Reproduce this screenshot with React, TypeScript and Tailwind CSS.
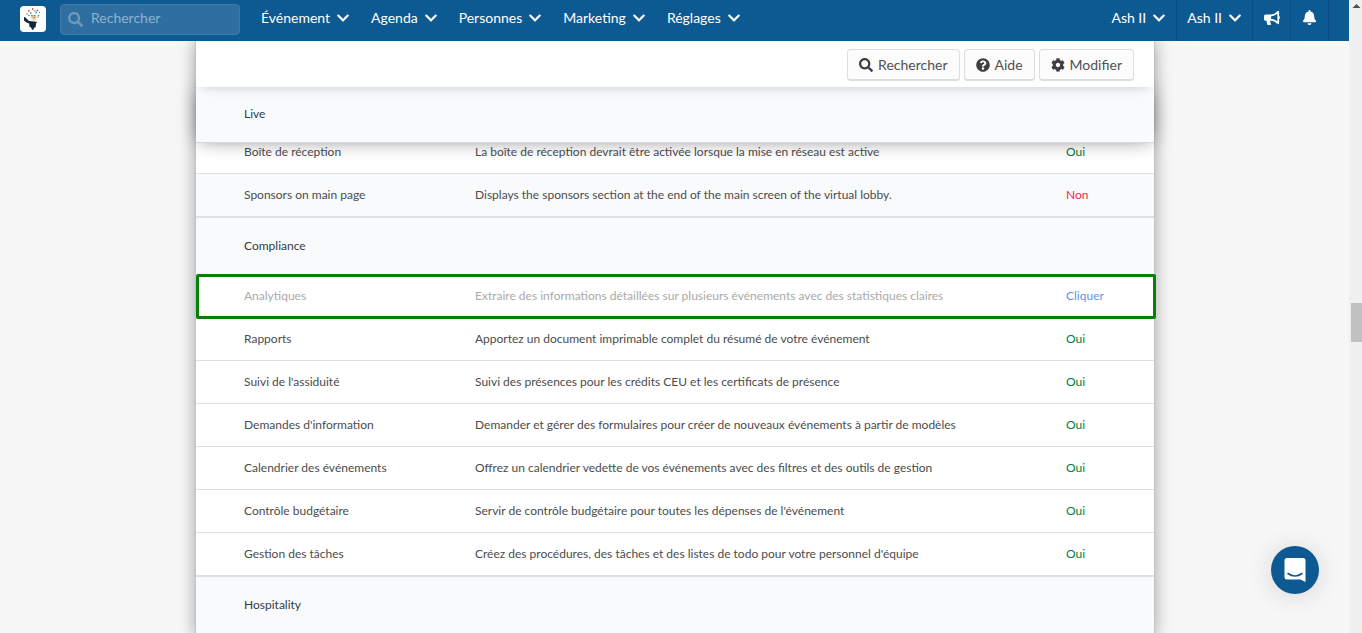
import { FaBell, FaBullhorn, FaChevronDown, FaCog, FaQuestionCircle, FaSearch } from 'react-icons/fa'

type Row = {
  name: string
  description: string
  status: 'Oui' | 'Non' | 'Cliquer'
}

type Section = {
  title: string
  pinned?: boolean
  rows: Row[]
}

const menus = ['Événement', 'Agenda', 'Personnes', 'Marketing', 'Réglages']

const sections: Section[] = [
  {
    title: 'Live',
    pinned: true,
    rows: [
      {
        name: 'Boîte de réception',
        description: 'La boîte de réception devrait être activée lorsque la mise en réseau est active',
        status: 'Oui',
      },
      {
        name: 'Sponsors on main page',
        description: 'Displays the sponsors section at the end of the main screen of the virtual lobby.',
        status: 'Non',
      },
    ],
  },
  {
    title: 'Compliance',
    rows: [
      {
        name: 'Analytiques',
        description: 'Extraire des informations détaillées sur plusieurs événements avec des statistiques claires',
        status: 'Cliquer',
      },
      {
        name: 'Rapports',
        description: 'Apportez un document imprimable complet du résumé de votre événement',
        status: 'Oui',
      },
      {
        name: "Suivi de l'assiduité",
        description: 'Suivi des présences pour les crédits CEU et les certificats de présence',
        status: 'Oui',
      },
      {
        name: "Demandes d'information",
        description: 'Demander et gérer des formulaires pour créer de nouveaux événements à partir de modèles',
        status: 'Oui',
      },
      {
        name: 'Calendrier des événements',
        description: 'Offrez un calendrier vedette de vos événements avec des filtres et des outils de gestion',
        status: 'Oui',
      },
      {
        name: 'Contrôle budgétaire',
        description: "Servir de contrôle budgétaire pour toutes les dépenses de l'événement",
        status: 'Oui',
      },
      {
        name: 'Gestion des tâches',
        description: "Créez des procédures, des tâches et des listes de todo pour votre personnel d'équipe",
        status: 'Oui',
      },
    ],
  },
  { title: 'Hospitality', rows: [] },
]

const actions = [
  { label: 'Rechercher', icon: FaSearch },
  { label: 'Aide', icon: FaQuestionCircle },
  { label: 'Modifier', icon: FaCog },
]

function Logo() {
  return (
    <svg viewBox="0 0 26 26" className="size-[26px]" aria-hidden="true">
      <rect width="26" height="26" rx="4" fill="#fff" />
      <path d="M4 11l1.500.5 3.500 3.500 7.500.8.500 1-1 .5-.3 4-1.700.5-.5 2h-1.500l-1-2.500-1.500-.3-.3-3.500-2.700-1-2.500-2z" fill="#12283a" />
      <path d="M10.500 10l1.500 4.500h3.500l1.500-4-3-1.500z" fill="#ead9b5" />
      <path d="M11 9l2 1M15 12l-2-1" stroke="#e2703f" strokeWidth="1.300" />
      <path d="M8 5h1.500M12 3h1.500M17 4l1 1M6.500 8h1" stroke="#d8432f" strokeWidth="1.400" />
      <path d="M10 7h1.500M15.500 6.500h1.500M19 9l-1 1M14 9.500h1.500" stroke="#3c9c8c" strokeWidth="1.400" />
      <path d="M14.500 5h1M19 6.500h.8M8.500 9.500h1M17.500 11h.8" stroke="#33475b" strokeWidth="1.200" />
    </svg>
  )
}

function TopBar() {
  return (
    <header className="relative z-30 flex h-[41px] shrink-0 items-stretch bg-[#0d5991] text-sm text-white">
      <a href="#accueil" aria-label="Accueil" className="mr-3.5 ml-5 flex items-center pb-[3px]">
        <Logo />
      </a>
      <label className="mt-1 flex h-[31px] w-[180px] items-center gap-2 rounded border border-[#3f79a8] bg-[#2e6ea0] px-[7px]">
        <FaSearch className="size-[15px] shrink-0 text-[#7199bc]" />
        <input
          type="text"
          aria-label="Rechercher"
          placeholder="Rechercher"
          className="w-full min-w-0 bg-transparent pb-1 outline-none placeholder:text-[#8fb2cf]"
        />
      </label>
      <nav className="ml-[21px] flex items-center gap-[21px] pb-1.5">
        {menus.map((label) => (
          <button key={label} type="button" className="flex items-center gap-1.5">
            {label}
            <FaChevronDown className="size-3.5" />
          </button>
        ))}
      </nav>
      <div className="ml-auto flex items-stretch pr-5">
        {['compte', 'profil'].map((id) => (
          <button
            key={id}
            type="button"
            className="flex items-center gap-1.5 border-r border-[#0b4f82] px-[10px] pb-1.5"
          >
            Ash II
            <FaChevronDown className="size-3.5" />
          </button>
        ))}
        <button
          type="button"
          aria-label="Annonces"
          className="flex w-[38px] items-center justify-center border-r border-[#0b4f82] pb-1.5"
        >
          <FaBullhorn className="size-4" />
        </button>
        <button
          type="button"
          aria-label="Notifications"
          className="flex w-[38px] items-center justify-center border-r border-[#0b4f82] pb-1.5"
        >
          <FaBell className="size-[15px]" />
        </button>
      </div>
    </header>
  )
}

function StatusCell({ status }: { status: Row['status'] }) {
  if (status === 'Cliquer') {
    return (
      <a href="#analytiques" className="text-[#6592e0]">
        Cliquer
      </a>
    )
  }
  return <span className={status === 'Oui' ? 'text-[#008040]' : 'text-[#ed1c4b]'}>{status}</span>
}

function FeatureSection({ section }: { section: Section }) {
  return (
    <section className="border-b-2 border-[#dee1e3]">
      <h2
        className={
          section.pinned
            ? 'relative z-10 -mb-3 flex h-14 items-center border-b border-[#d5dadd] bg-[#f9fafc] px-12 pb-0.5 text-xs text-[#333c45] shadow-[0_0_20px_-4px_rgba(0,0,0,0.55)]'
            : 'flex h-[57px] items-center bg-[#f9fafc] px-12 pb-0.5 text-xs text-[#333c45]'
        }
      >
        {section.title}
      </h2>
      <table className="w-full table-fixed border-separate border-spacing-0 text-left text-xs text-[#4c4c4c]">
        <colgroup>
          <col className="w-[279px]" />
          <col />
          <col className="w-[100px]" />
        </colgroup>
        <tbody className="[&>tr:not(:last-child)>*]:border-b [&>tr:not(:last-child)>*]:border-[#dee1e3]">
          {section.rows.map((row) => {
            const locked = row.status === 'Cliquer'
            return (
              <tr
                key={row.name}
                className={`relative h-[43px] last:h-[42px] ${locked ? 'text-[#a9a9a9]' : ''} ${
                  row.status === 'Non' ? 'bg-[#f9fafc]' : ''
                }`}
              >
                <th scope="row" className="p-0 pl-12 font-normal">
                  {row.name}
                  {locked && (
                    <span className="pointer-events-none absolute -top-px -right-0.5 -bottom-px left-0 rounded-xs border-3 border-[#058009]" />
                  )}
                </th>
                <td>{row.description}</td>
                <td className="pl-3">
                  <StatusCell status={row.status} />
                </td>
              </tr>
            )
          })}
        </tbody>
      </table>
    </section>
  )
}

export default function App() {
  return (
    <div className="flex h-screen overflow-hidden bg-[#f7f7f7] font-['Lato',sans-serif]">
      <div className="flex min-w-0 flex-1 flex-col">
        <TopBar />
        <main className="min-h-0 flex-1 pl-px">
          <div className="mx-auto min-h-full max-w-[960px] border-x border-[#c4c4c4] bg-white shadow-[0_0_16px_rgba(0,0,0,0.35)]">
            <div className="relative z-20 flex h-[46px] items-center justify-end gap-1 bg-white pt-0.5 pr-5 shadow-[0_6px_12px_-6px_rgba(0,0,0,0.2)]">
              {actions.map(({ label, icon: Icon }) => (
                <button
                  key={label}
                  type="button"
                  className="flex h-8 items-center gap-[5px] rounded border border-b-2 border-[#dcdddd] bg-[#fcfcfc] px-[11px] text-sm text-[#505050]"
                >
                  <Icon className="size-3.5 text-[#3f3f3f]" />
                  {label}
                </button>
              ))}
            </div>
            {sections.map((section) => (
              <FeatureSection key={section.title} section={section} />
            ))}
          </div>
        </main>
      </div>

      <div className="flex w-[13px] shrink-0 flex-col items-end bg-[#f0f0f0]" aria-hidden="true">
        <svg viewBox="0 0 11 303" className="h-[303px] w-[11px]">
          <path d="M1.500 8L5.500 4l4 4z" fill="#505050" />
        </svg>
        <div className="h-[39px] w-[11px] bg-[#c1c1c1]" />
      </div>

      <button
        type="button"
        aria-label="Ouvrir la messagerie"
        className="fixed right-[43px] bottom-[39px] z-40 flex size-12 items-center justify-center rounded-full bg-[#0d5991] shadow-[0_2px_28px_rgba(0,0,0,0.14)]"
      >
        <svg viewBox="0 0 24 26" className="h-[26px] w-6" aria-hidden="true">
          <path d="M4 1h16a2.500 2.500 0 0 1 2.500 2.500V25l-5-2.500H4A2.500 2.500 0 0 1 1.500 20V3.500A2.500 2.500 0 0 1 4 1z" fill="#fff" />
          <path d="M5 16.500c4.200 3.200 9.800 3.200 14 0" fill="none" stroke="#0d5991" strokeWidth="1.600" strokeLinecap="round" />
        </svg>
      </button>
    </div>
  )
}
